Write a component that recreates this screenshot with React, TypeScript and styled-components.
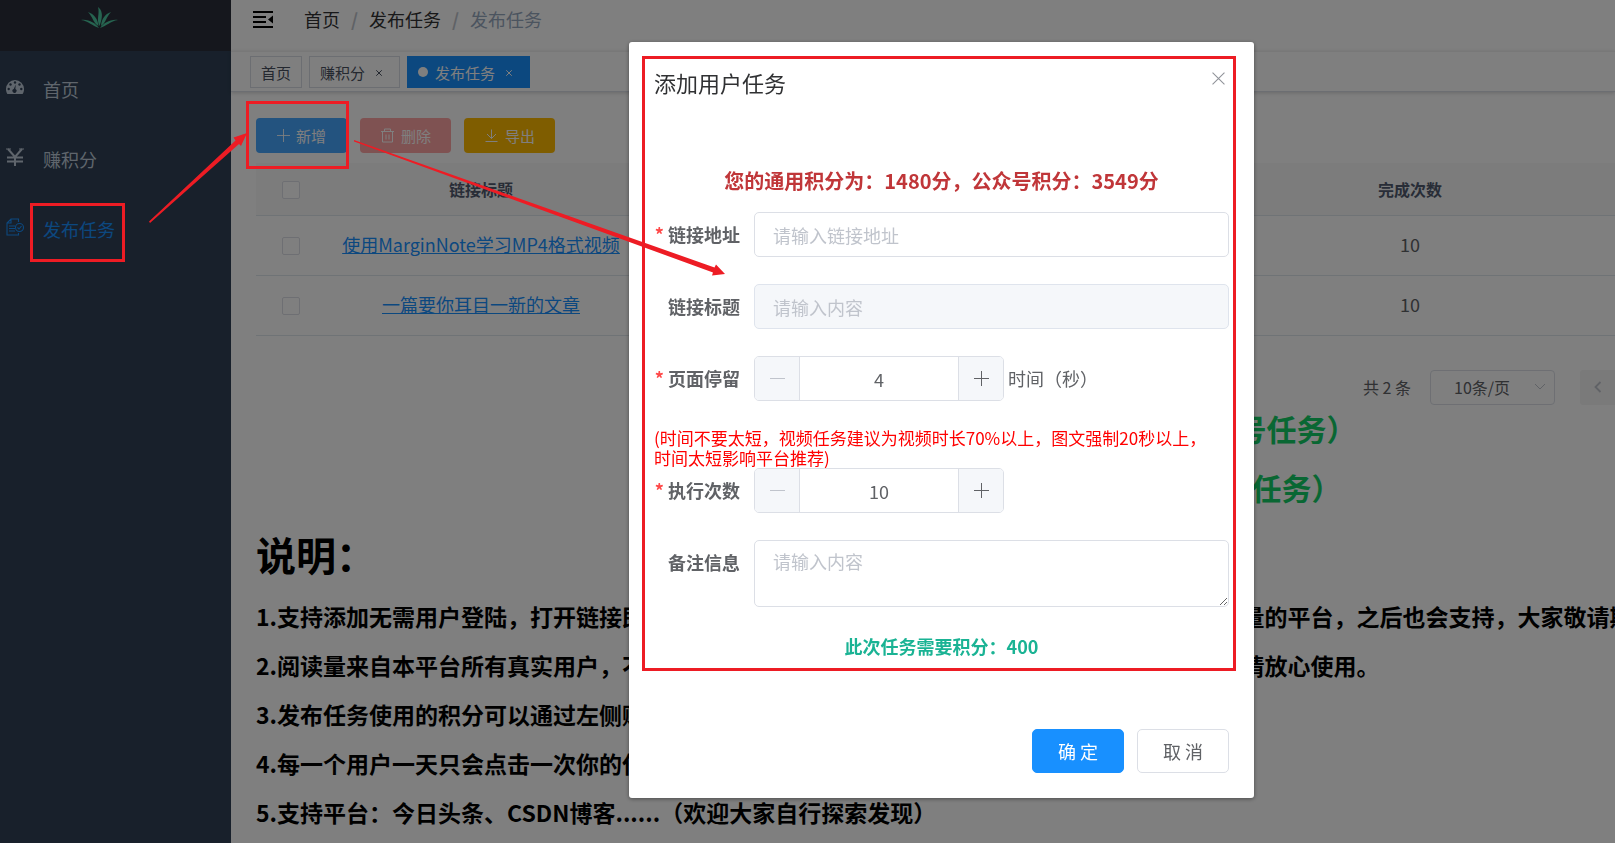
import React from 'react';
import styled, { createGlobalStyle } from 'styled-components';

const GlobalStyle = createGlobalStyle`
  * { box-sizing: border-box; }
  body {
    margin: 0;
    background: #fff;
    color: #303133;
    font-family: 'Noto Sans CJK SC', 'Noto Sans', sans-serif;
    font-size: 18px;
  }
  button, input, select, textarea { font-family: inherit; }
  h1, h2, h3, p { margin: 0; padding: 0; font-size: inherit; font-weight: inherit; }
`;

/* ---------- page frame ---------- */

const Shell = styled.div`
  display: flex;
  min-height: 100vh;
  overflow: hidden;
`;

const Sidebar = styled.aside`
  flex: 0 0 231px;
  background: #304156;
`;

const Logo = styled.div`
  height: 51px;
  background: #2b2f3a;
  display: flex;
  justify-content: center;
  padding: 6px 32px 0 0;
`;

const Menu = styled.nav`
  display: flex;
  flex-direction: column;
  padding-top: 3px;
`;

const MenuLink = styled.a<{ $active?: boolean }>`
  display: flex;
  align-items: center;
  gap: 19px;
  height: 70px;
  padding: 0 6px;
  color: ${(p) => (p.$active ? '#1890ff' : '#bfcbd9')};
  text-decoration: none;
  svg { flex: none; margin-bottom: 4px; }
`;

const Main = styled.main`
  flex: 1;
  min-width: 0;
`;

const TopBar = styled.header`
  display: flex;
  align-items: center;
  gap: 31px;
  height: 51px;
  padding: 0 22px 13px;
`;

const IconButton = styled.button`
  display: flex;
  padding: 0;
  border: 0;
  background: none;
  color: #000;
`;

const Crumbs = styled.nav`
  display: flex;
  gap: 11px;
  line-height: 26px;
  a { color: #303133; text-decoration: none; }
  b { color: #c0c4cc; }
  span { color: #97a8be; }
`;

const Tags = styled.div`
  display: flex;
  gap: 7px;
  height: 41px;
  padding: 4px 19px 0;
  border-top: 1px solid #f0f0f0;
  border-bottom: 1px solid #d8dce5;
  box-shadow: 0 1px 4px rgba(0, 0, 0, 0.18);
`;

const Tag = styled.a<{ $active?: boolean }>`
  display: flex;
  align-items: center;
  gap: 7px;
  height: 32px;
  padding: 0 10px;
  border: 1px solid ${(p) => (p.$active ? '#1890ff' : '#d8dce5')};
  background: ${(p) => (p.$active ? '#1890ff' : '#fff')};
  color: ${(p) => (p.$active ? '#fff' : '#495060')};
  font-size: 15px;
  text-decoration: none;
`;

const Dot = styled.i`
  width: 10px;
  height: 10px;
  border-radius: 50%;
  background: #fff;
`;

const TagClose = styled.span`
  display: flex;
  padding: 2px 7px 0 4px;
`;

const Content = styled.section`
  padding: 26px 0 0 25px;
`;

const Toolbar = styled.div`
  display: flex;
  gap: 13px;
  margin-bottom: 10px;
`;

const ToolButton = styled.button<{ $color: string }>`
  display: flex;
  align-items: center;
  justify-content: center;
  gap: 6px;
  width: 91px;
  height: 35px;
  padding: 0;
  border: 0;
  border-radius: 4px;
  background: ${(p) => p.$color};
  color: #fff;
  font-size: 15px;
`;

/* ---------- table ---------- */

const Table = styled.table`
  width: 100%;
  border-collapse: collapse;
  table-layout: fixed;
  color: #606266;
  th {
    height: 52px;
    padding: 0;
    background: #f8f8f9;
    color: #515a6e;
    font-size: 16px;
  }
  td {
    height: 60px;
    padding: 0 0 2px;
    text-align: center;
  }
  th, td { border-bottom: 1px solid #dfe6ec; }
  a { color: #1890ff; }
`;

const Col = styled.col<{ $w?: number }>`
  width: ${(p) => (p.$w ? `${p.$w}px` : 'auto')};
`;

const Check = styled.input`
  appearance: none;
  display: block;
  width: 18px;
  height: 18px;
  margin: 3px auto 0;
  border: 1px solid #dcdfe6;
  border-radius: 2px;
  background: #fff;
`;

const Pager = styled.div`
  display: flex;
  align-items: center;
  justify-content: flex-end;
  height: 35px;
  margin-top: 34px;
  color: #606266;
  font-size: 16px;
`;

const SelectWrap = styled.label`
  display: grid;
  align-items: center;
  margin: 0 25px 0 19px;
  select, svg { grid-area: 1 / 1; }
  svg { justify-self: end; margin-right: 9px; pointer-events: none; }
`;

const PageSize = styled.select`
  appearance: none;
  width: 125px;
  height: 35px;
  padding: 0 23px;
  border: 1px solid #dcdfe6;
  border-radius: 4px;
  background: #fff;
  color: #606266;
  font-size: 16px;
`;

const PrevButton = styled.button`
  display: flex;
  align-items: center;
  justify-content: center;
  width: 35px;
  height: 35px;
  border: 0;
  border-radius: 3px 0 0 3px;
  background: #f4f4f5;
  color: #c0c4cc;
`;

/* ---------- notes ---------- */

const Rules = styled.div`
  margin-top: -6px;
  padding-left: 242px;
  color: #13ce66;
  font-size: 30px;
  font-weight: 700;
  line-height: 59px;
  text-align: center;
  white-space: nowrap;
`;

const NotesTitle = styled.h1`
  margin-top: 7px;
  color: #000;
  font-size: 40px;
  font-weight: 700;
  line-height: 60px;
`;

const Notes = styled.div`
  display: flex;
  flex-direction: column;
  gap: 24px;
  margin-top: 20px;
  color: #000;
  font-size: 23px;
  font-weight: 700;
  line-height: 25px;
  white-space: nowrap;
`;

/* ---------- dialog ---------- */

const Overlay = styled.div`
  position: fixed;
  inset: 0;
  display: flex;
  align-items: flex-start;
  justify-content: center;
  padding: 42px 0 0 268px;
  background: rgba(0, 0, 0, 0.5);
`;

const Dialog = styled.div`
  width: 625px;
  padding: 24px 25px 25px;
  border-radius: 3px;
  background: #fff;
  box-shadow: 0 1px 4px rgba(0, 0, 0, 0.4);
  color: #606266;
`;

const DialogHead = styled.div`
  display: flex;
  justify-content: space-between;
  padding-right: 4px;
  h2 {
    color: #303133;
    font-size: 22px;
    line-height: 32px;
  }
  button { color: #909399; align-self: flex-start; margin-top: 6px; }
`;

const Points = styled.p`
  margin: 67px 0 15px;
  color: #c03639;
  font-size: 20px;
  font-weight: 700;
  line-height: 32px;
  text-align: center;
`;

const Form = styled.form`
  display: flex;
  flex-direction: column;
  gap: 27px;
`;

const Field = styled.div`
  display: flex;
  label {
    flex: 0 0 100px;
    padding-right: 14px;
    font-weight: 700;
    line-height: 45px;
    text-align: right;
    white-space: nowrap;
  }
`;

const Star = styled.span`
  margin-right: 4px;
  color: #ff4949;
`;

const TextInput = styled.input`
  flex: 1;
  min-width: 0;
  height: 45px;
  padding: 0 18px;
  border: 1px solid #dcdfe6;
  border-radius: 5px;
  background: #fff;
  font-size: 18px;
  &::placeholder { color: #c0c4cc; }
  &:disabled { background: #f5f7fa; border-color: #dfe4ed; }
`;

const Area = styled.textarea`
  flex: 1;
  min-width: 0;
  height: 67px;
  padding: 7px 18px;
  border: 1px solid #dcdfe6;
  border-radius: 5px;
  font-size: 18px;
  line-height: 26px;
  &::placeholder { color: #c0c4cc; }
`;

const Stepper = styled.div`
  display: flex;
  width: 250px;
  height: 45px;
  border: 1px solid #dcdfe6;
  border-radius: 5px;
  overflow: hidden;
  input {
    flex: 1;
    min-width: 0;
    padding: 0;
    border: 0;
    color: #606266;
    font-size: 18px;
    text-align: center;
    appearance: textfield;
  }
  input::-webkit-inner-spin-button { display: none; }
`;

const StepButton = styled.button<{ $side: 'left' | 'right' }>`
  display: flex;
  align-items: center;
  justify-content: center;
  width: 45px;
  padding: 0;
  border: 0;
  border-${(p) => (p.$side === 'left' ? 'right' : 'left')}: 1px solid #dcdfe6;
  background: #f5f7fa;
  color: ${(p) => (p.$side === 'left' ? '#c0c4cc' : '#606266')};
`;

const Unit = styled.span`
  margin-left: 4px;
  line-height: 45px;
`;

const Hint = styled.p`
  margin-bottom: -27px;
  color: #ff0000;
  font-size: 17px;
  line-height: 20px;
`;

const Cost = styled.p`
  margin-top: -1px;
  color: #1ab394;
  font-weight: 700;
  line-height: 26px;
  text-align: center;
`;

const Actions = styled.div`
  display: flex;
  justify-content: flex-end;
  gap: 13px;
  margin-top: 70px;
`;

const ActionButton = styled.button<{ $primary?: boolean }>`
  width: 92px;
  height: 44px;
  padding: 0;
  border: 1px solid ${(p) => (p.$primary ? '#1890ff' : '#dcdfe6')};
  border-radius: 5px;
  background: ${(p) => (p.$primary ? '#1890ff' : '#fff')};
  color: ${(p) => (p.$primary ? '#fff' : '#606266')};
  font-size: 18px;
`;

/* Red call-outs drawn over the whole page */
const Marks = styled.svg`
  position: fixed;
  top: 0;
  left: 0;
  pointer-events: none;
`;

/* ---------- icons ---------- */

const LotusIcon = () => (
  <svg width="37" height="24" viewBox="0 0 37 24" fill="#4cc8a0">
    <path d="M17 1C21 4 21.500 9 20.500 13C20 16 19 18 18.500 20C15 13 19 8 17 1Z" />
    <path d="M7 6C13 8 17 13 17.500 20C12 17 12 11 7 6Z" />
    <path d="M30 6C24 8 20.500 13 20 20C25 17 25 11 30 6Z" />
    <path d="M0 14C8 13 14 17 18 22C11 20 8 15 0 14Z" />
    <path d="M37 14C29 13 23 17 19 22C26 20 29 15 37 14Z" />
  </svg>
);

const GaugeIcon = () => (
  <svg width="18" height="18" viewBox="0 0 18 18">
    <path d="M9 2a9 9 0 0 0-9 9c0 2 .5 3.700 1.400 5h15.200c.9-1.300 1.400-3 1.400-5a9 9 0 0 0-9-9Z" fill="currentColor" />
    <g fill="#304156">
      <circle cx="9" cy="4.500" r="1.200" />
      <circle cx="4.500" cy="6.500" r="1.200" />
      <circle cx="13.500" cy="6.500" r="1.200" />
      <circle cx="2.700" cy="11" r="1.200" />
      <circle cx="15.300" cy="11" r="1.200" />
      <path d="M9.700 6.500l-.3 4.600a2 2 0 1 1-1.600-.1Z" />
    </g>
  </svg>
);

const YenIcon = () => (
  <svg width="18" height="18" viewBox="0 0 18 18" fill="none" stroke="currentColor" strokeWidth="2">
    <path d="M2 1l7 8 7-8M9 9v9M1 9.500h16M1 13.500h16" />
    <path d="M0 1h5M13 1h5" strokeWidth="1.200" />
  </svg>
);

const TaskIcon = () => (
  <svg width="18" height="18" viewBox="0 0 18 18" fill="none" stroke="currentColor" strokeWidth="1.100">
    <path d="M12.500 4V1H5L1 5v12h11.500v-2M5 1v4H1M3 8h6M3 10.500h6M3 13h6" />
    <circle cx="13.500" cy="9.500" r="4" />
    <path d="M11.500 9.500l1.500 1.500 2.500-3" />
  </svg>
);

const FoldIcon = () => (
  <svg width="20" height="17" viewBox="0 0 20 17" fill="currentColor">
    <path d="M0 0h20v2H0zM0 5h13v2H0zM0 10h13v2H0zM0 15h20v2H0zM20 4.500v8l-5-4z" />
  </svg>
);

const CrossIcon = ({ size, width = 1 }: { size: number; width?: number }) => (
  <svg width={size} height={size} viewBox="0 0 12 12" fill="none" stroke="currentColor" strokeWidth={width}>
    <path d="M.5.5l11 11M11.500.5l-11 11" />
  </svg>
);

const PlusIcon = ({ size }: { size: number }) => (
  <svg width={size} height={size} viewBox="0 0 15 15" fill="none" stroke="currentColor">
    <path d="M0 7.500h15M7.500 0v15" />
  </svg>
);

const MinusIcon = () => (
  <svg width="15" height="15" viewBox="0 0 15 15" fill="none" stroke="currentColor">
    <path d="M0 7.500h15" />
  </svg>
);

const TrashIcon = () => (
  <svg width="15" height="15" viewBox="0 0 15 15" fill="none" stroke="currentColor">
    <path d="M1 3.500h13M4.500 3.500v-2.500h6v2.500M2.500 3.500v10.500h10v-10.500M6 6.500v5M9 6.500v5" />
  </svg>
);

const DownloadIcon = () => (
  <svg width="15" height="15" viewBox="0 0 15 15" fill="none" stroke="currentColor">
    <path d="M1.500 13.500h12M7.500 1.500v9M3 6l4.500 4.500L12 6" />
  </svg>
);

const ChevronDown = () => (
  <svg width="12" height="8" viewBox="0 0 12 8" fill="none" stroke="#c0c4cc">
    <path d="M1 1l5 5 5-5" />
  </svg>
);

const ChevronLeft = () => (
  <svg width="8" height="12" viewBox="0 0 8 12" fill="none" stroke="currentColor" strokeWidth="1.800">
    <path d="M6.500 1l-5 5 5 5" />
  </svg>
);

/* ---------- data ---------- */

const rows = [
  { title: '使用MarginNote学习MP4格式视频', done: 10 },
  { title: '一篇要你耳目一新的文章', done: 10 },
];

const notes = [
  '1.支持添加无需用户登陆，打开链接即可查看内容的App类任务，目前对于需要登陆才能计算阅读量的平台，之后也会支持，大家敬请期',
  '2.阅读量来自本平台所有真实用户，不会出现机器刷量的情况，也符合各大App平台的相关规定，请放心使用。',
  '3.发布任务使用的积分可以通过左侧赚积分获得。',
  '4.每一个用户一天只会点击一次你的任务链接。',
  '5.支持平台：今日头条、CSDN博客......（欢迎大家自行探索发现）',
];

function NumberField({ id, label, value, unit }: { id: string; label: string; value: number; unit?: string }) {
  return (
    <Field>
      <label htmlFor={id}><Star>*</Star>{label}</label>
      <Stepper>
        <StepButton type="button" $side="left" aria-label="减少"><MinusIcon /></StepButton>
        <input id={id} type="number" defaultValue={value} />
        <StepButton type="button" $side="right" aria-label="增加"><PlusIcon size={15} /></StepButton>
      </Stepper>
      {unit && <Unit>{unit}</Unit>}
    </Field>
  );
}

export default function App() {
  return (
    <>
      <GlobalStyle />
      <Shell>
        <Sidebar>
          <Logo><LotusIcon /></Logo>
          <Menu>
            <MenuLink href="#home"><GaugeIcon />首页</MenuLink>
            <MenuLink href="#earn"><YenIcon />赚积分</MenuLink>
            <MenuLink href="#publish" $active><TaskIcon />发布任务</MenuLink>
          </Menu>
        </Sidebar>
        <Main>
          <TopBar>
            <IconButton aria-label="收起菜单"><FoldIcon /></IconButton>
            <Crumbs>
              <a href="#home">首页</a><b>/</b><a href="#publish">发布任务</a><b>/</b><span>发布任务</span>
            </Crumbs>
          </TopBar>
          <Tags>
            <Tag href="#home">首页</Tag>
            <Tag href="#earn">赚积分<TagClose><CrossIcon size={6} width={2} /></TagClose></Tag>
            <Tag href="#publish" $active><Dot />发布任务<TagClose><CrossIcon size={6} width={2} /></TagClose></Tag>
          </Tags>
          <Content>
            <Toolbar>
              <ToolButton $color="#46a6ff"><PlusIcon size={13} />新增</ToolButton>
              <ToolButton $color="#ffa4a4" disabled><TrashIcon />删除</ToolButton>
              <ToolButton $color="#ffba00"><DownloadIcon />导出</ToolButton>
            </Toolbar>
            <Table>
              <colgroup><Col $w={70} /><Col $w={310} /><Col /><Col $w={410} /></colgroup>
              <thead>
                <tr>
                  <th><Check type="checkbox" aria-label="全选" /></th>
                  <th>链接标题</th>
                  <th />
                  <th>完成次数</th>
                </tr>
              </thead>
              <tbody>
                {rows.map((r) => (
                  <tr key={r.title}>
                    <td><Check type="checkbox" aria-label={r.title} /></td>
                    <td><a href="#task">{r.title}</a></td>
                    <td />
                    <td>{r.done}</td>
                  </tr>
                ))}
              </tbody>
            </Table>
            <Pager>
              <span>共 2 条</span>
              <SelectWrap>
                <PageSize aria-label="每页条数" defaultValue="10"><option value="10">10条/页</option></PageSize>
                <ChevronDown />
              </SelectWrap>
              <PrevButton aria-label="上一页" disabled><ChevronLeft /></PrevButton>
            </Pager>
            <Rules>
              <h2>公众号积分（只能用来发布微信公众号任务）</h2>
              <h2>通用积分（用来发布所有平台类型的任务）</h2>
            </Rules>
            <NotesTitle>说明：</NotesTitle>
            <Notes>
              {notes.map((n) => <h3 key={n}>{n}</h3>)}
            </Notes>
          </Content>
        </Main>
      </Shell>

      <Overlay>
        <Dialog role="dialog" aria-label="添加用户任务">
          <DialogHead>
            <h2>添加用户任务</h2>
            <IconButton aria-label="关闭"><CrossIcon size={13} /></IconButton>
          </DialogHead>
          <Points>您的通用积分为：1480分，公众号积分：3549分</Points>
          <Form>
            <Field>
              <label htmlFor="url"><Star>*</Star>链接地址</label>
              <TextInput id="url" placeholder="请输入链接地址" />
            </Field>
            <Field>
              <label htmlFor="title">链接标题</label>
              <TextInput id="title" placeholder="请输入内容" disabled />
            </Field>
            <NumberField id="stay" label="页面停留" value={4} unit="时间（秒）" />
            <Hint>
              (时间不要太短，视频任务建议为视频时长70%以上，图文强制20秒以上，
              <br />
              时间太短影响平台推荐)
            </Hint>
            <NumberField id="times" label="执行次数" value={10} />
            <Field>
              <label htmlFor="remark">备注信息</label>
              <Area id="remark" placeholder="请输入内容" />
            </Field>
            <Cost>此次任务需要积分：400</Cost>
          </Form>
          <Actions>
            <ActionButton $primary>确 定</ActionButton>
            <ActionButton>取 消</ActionButton>
          </Actions>
        </Dialog>
      </Overlay>

      <Marks width="1260" height="700" viewBox="0 0 1260 700" aria-hidden="true">
        <g fill="none" stroke="#ed1c24" strokeWidth="3">
          <rect x="31.500" y="204.500" width="92" height="56" />
          <rect x="247.500" y="102.500" width="100" height="65" />
          <rect x="643.500" y="57.500" width="591" height="612" />
        </g>
        <g fill="#ed1c24">
          <path d="M149 221.500L235.500 140.500L233.500 137.500L247 133L241 146L239 144L150 223Z" />
          <path d="M354 140L714.500 267.500L716 264.500L725 274L712 275.500L713 272.500L354 141.500Z" />
        </g>
      </Marks>
    </>
  );
}
